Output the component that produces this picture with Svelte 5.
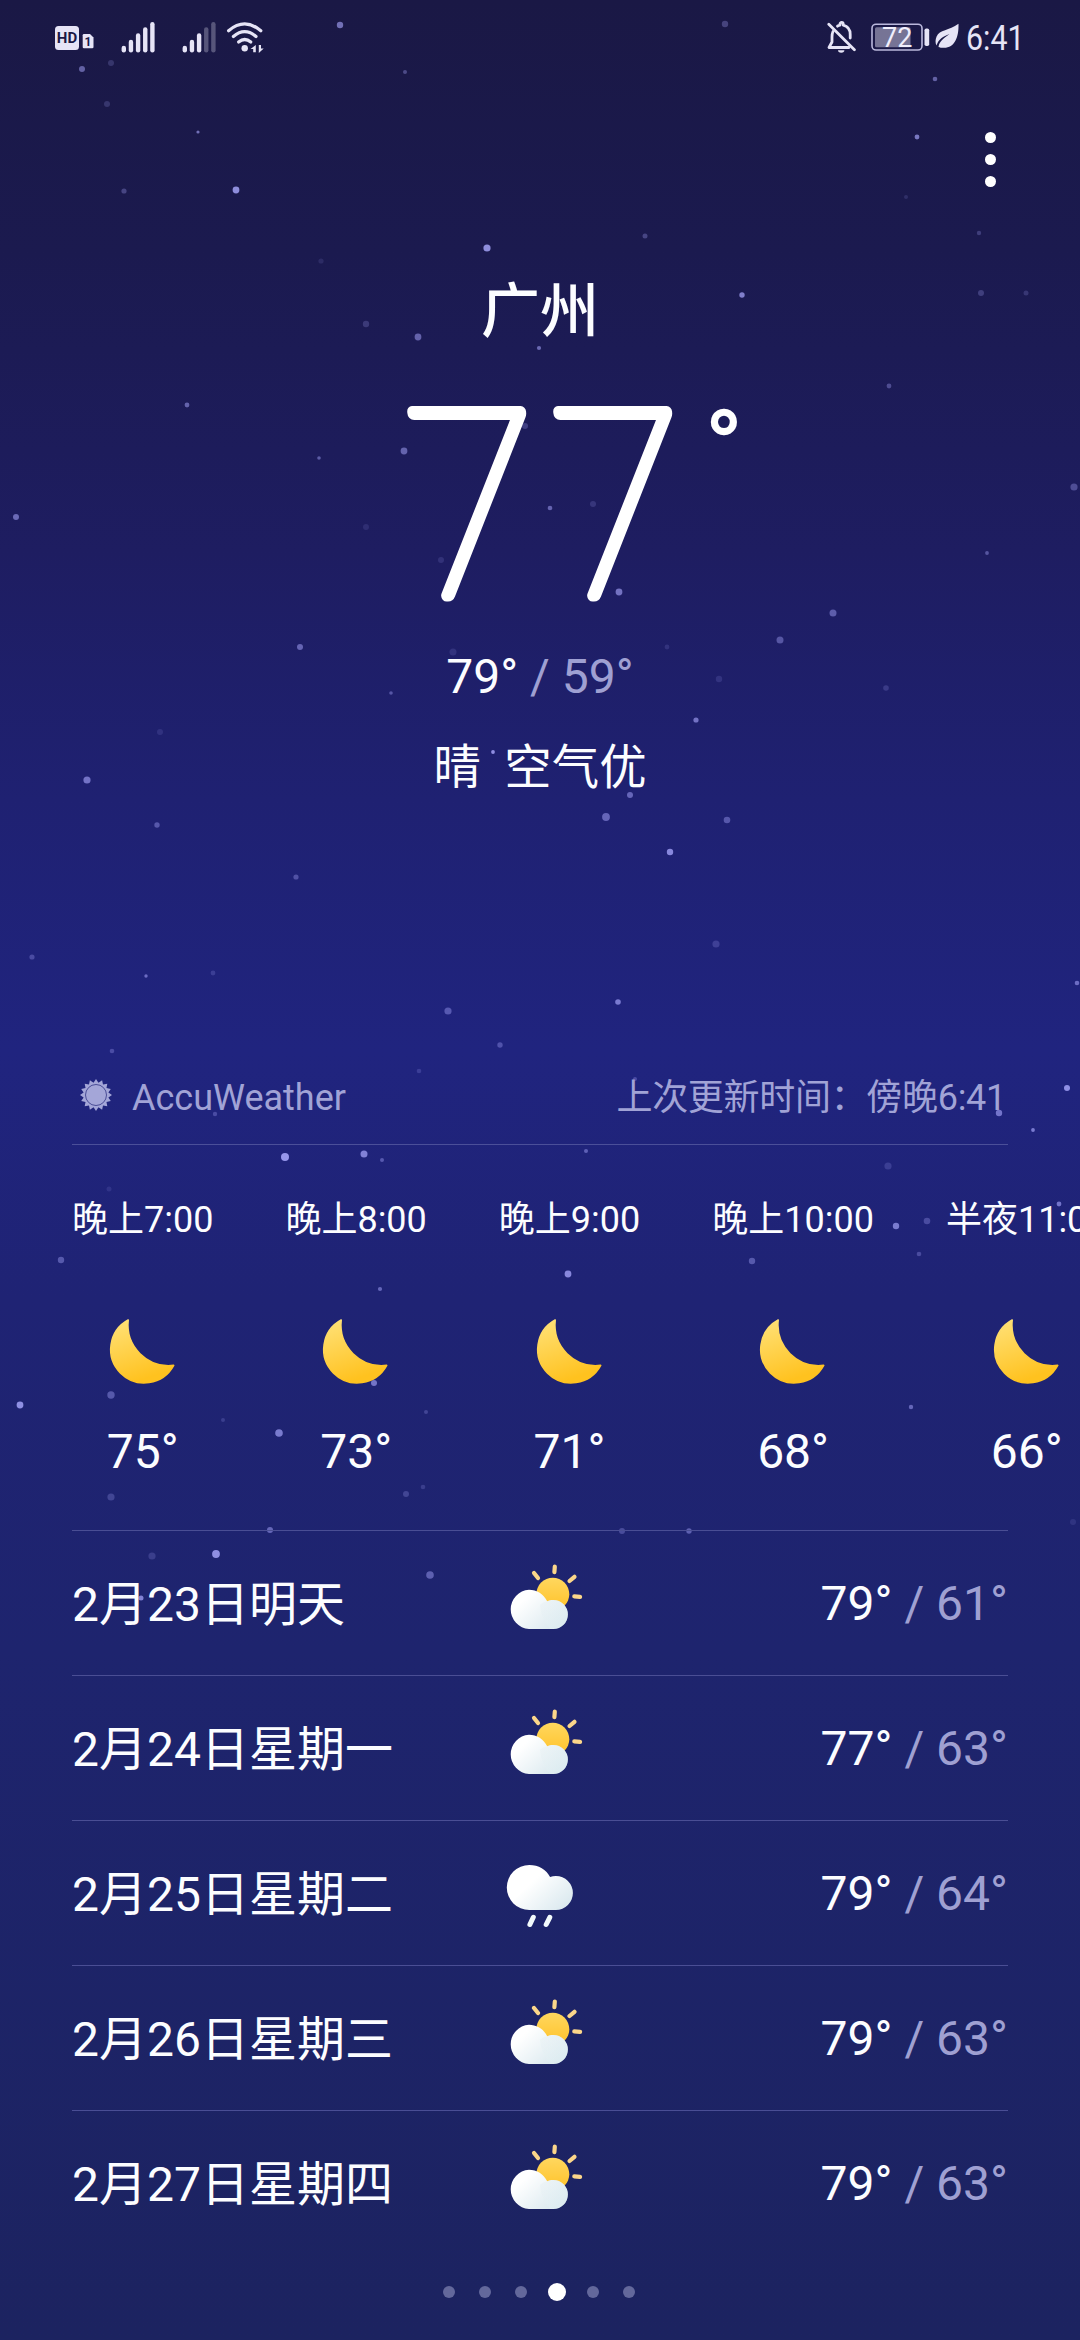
<script>
  const hours = [
    { label: '晚上7:00', temp: 75 },
    { label: '晚上8:00', temp: 73 },
    { label: '晚上9:00', temp: 71 },
    { label: '晚上10:00', temp: 68 },
    { label: '半夜11:00', temp: 66 },
  ]

  const days = [
    { date: '2月23日明天', icon: 'partly', high: 79, low: 61 },
    { date: '2月24日星期一', icon: 'partly', high: 77, low: 63 },
    { date: '2月25日星期二', icon: 'rain', high: 79, low: 64 },
    { date: '2月26日星期三', icon: 'partly', high: 79, low: 63 },
    { date: '2月27日星期四', icon: 'partly', high: 79, low: 63 },
  ]

  const pages = 6
  const current = 3

  // x, y, radius, opacity
  const stars = [
    [340, 25, 3.2, 0.6], [725, 24, 3.2, 0.3], [82, 69, 3, 0.5], [111, 63, 3, 0.2], [107, 104, 3, 0.2],
    [405, 72, 2, 0.35], [198, 132, 1.6, 0.6], [935, 79, 2.3, 0.5], [917, 137, 2.4, 0.65], [124, 191, 2.6, 0.3],
    [236, 190, 3.4, 0.8], [487, 248, 3.6, 0.8], [645, 236, 2.5, 0.3], [321, 261, 2.6, 0.12], [906, 197, 2, 0.15],
    [979, 233, 2.2, 0.25], [742, 295, 2.7, 0.7], [981, 293, 3, 0.25], [1026, 293, 2.5, 0.2], [366, 324, 3.2, 0.22],
    [418, 337, 3.4, 0.5], [539, 348, 2.1, 0.55], [187, 405, 2.4, 0.5], [889, 386, 2.4, 0.35], [404, 451, 3.4, 0.5],
    [319, 458, 1.8, 0.45], [16, 517, 3, 0.55], [1074, 487, 3.6, 0.35], [550, 508, 2.3, 0.5], [593, 504, 3, 0.18],
    [366, 527, 3, 0.12], [441, 560, 3, 0.15], [987, 553, 1.9, 0.4], [619, 592, 3.4, 0.6], [833, 613, 3.5, 0.45],
    [300, 647, 3, 0.5], [780, 640, 3.5, 0.4], [453, 652, 3.5, 0.15], [667, 647, 2.4, 0.15], [719, 679, 3.2, 0.15],
    [391, 693, 1.8, 0.4], [886, 688, 2.8, 0.2], [160, 732, 3, 0.13], [696, 720, 2.6, 0.6], [493, 752, 1.9, 0.8],
    [87, 780, 3.6, 0.6], [157, 825, 2.7, 0.4], [630, 795, 3, 0.5], [606, 817, 3.9, 0.5], [727, 820, 3.3, 0.4],
    [670, 852, 3.2, 0.75], [296, 877, 2.6, 0.35], [716, 944, 3.6, 0.22], [32, 957, 2.6, 0.3], [146, 976, 1.7, 0.55],
    [213, 973, 2.4, 0.2], [1077, 983, 2.3, 0.55], [618, 1002, 2.8, 0.65], [448, 1011, 3.6, 0.4], [500, 1045, 2.7, 0.35],
    [112, 1051, 2.3, 0.3], [1067, 1088, 3, 0.8], [999, 1113, 3.2, 0.6], [1033, 1130, 1.9, 0.65], [285, 1157, 4, 0.85],
    [364, 1154, 3.5, 0.7], [382, 1160, 2, 0.4], [586, 1151, 2, 0.45], [888, 1166, 3.6, 0.2], [525, 426, 3, 0.25],
    [215, 1114, 2.2, 0.3], [419, 1071, 2.3, 0.2], [635, 1079, 2, 0.3], [109, 1189, 2.5, 0.12], [896, 1226, 3.2, 0.65],
    [927, 1221, 3.3, 0.3], [919, 1254, 2.3, 0.3], [1059, 1204, 2.4, 0.6], [752, 1261, 3.2, 0.4], [568, 1274, 3.4, 0.75],
    [61, 1260, 3.2, 0.4], [380, 1289, 2.1, 0.5], [111, 1395, 3.7, 0.4], [374, 1383, 3, 0.6], [279, 1433, 3.8, 0.65],
    [111, 1497, 3.6, 0.25], [426, 1412, 2, 0.25], [406, 1494, 3, 0.25], [423, 1487, 2.3, 0.2], [223, 1420, 2, 0.2],
    [20, 1405, 3.4, 0.8], [911, 1407, 2.2, 0.5], [689, 1531, 2.7, 0.45], [1073, 1522, 3, 0.12], [270, 1530, 3, 0.5],
    [152, 1556, 3.6, 0.2], [216, 1554, 3.9, 0.8], [430, 1575, 3.8, 0.45], [141, 1598, 2.5, 0.7], [622, 1531, 3, 0.3],
  ]

  // sixteen-pointed rim of the provider logo
  const rim = [...Array(32)]
    .map((_, i) => {
      const r = i % 2 ? 12.6 : 16
      const a = (i * Math.PI) / 16
      return `${(18 + r * Math.sin(a)).toFixed(2)},${(18 - r * Math.cos(a)).toFixed(2)}`
    })
    .join(' ')
</script>

<main>
  <svg class="sky" width="1080" height="2340" viewBox="0 0 1080 2340">
    {#each stars as [x, y, r, o]}
      <circle cx={x} cy={y} {r} fill="#abaaff" opacity={o} />
    {/each}
  </svg>

  <header class="status">
    <svg class="sim" width="40" height="32" viewBox="0 0 40 32">
      <rect x="0" y="5" width="24" height="24" rx="3.5" fill="#e6e4f6" />
      <text class="hd" x="12" y="22.3" text-anchor="middle">HD</text>
      <path d="M29 13h6l3.5 3.5V26a1.3 1.3 0 0 1-1.3 1.3H29a1.3 1.3 0 0 1-1.3-1.3V14.3a1.3 1.3 0 0 1 1.3-1.3z" fill="#e6e4f6" />
      <text class="one" x="33" y="24.8" text-anchor="middle">1</text>
    </svg>
    {#each [5, 3] as level}
      <svg class="signal" width="34" height="32" viewBox="0 0 34 32">
        {#each [6.8, 12.8, 19.2, 25.2, 30.5] as h, i}
          <rect x={0.6 + i * 7.15} y={31.5 - h} width="4.4" height={h} rx="2.2" fill="#e6e4f6" opacity={i < level ? 1 : 0.3} />
        {/each}
      </svg>
    {/each}
    <svg class="wifi" width="40" height="32" viewBox="0 0 40 32">
      <g fill="none" stroke="#e6e4f6" stroke-width="3.2" stroke-linecap="round">
        <path d="M2.6 9.7q16.1-13.6 32.2 0" />
        <path d="M7.4 15.5q11.3-9.6 22.6 0" />
        <path d="M12.6 21q6.1-5 12.2 0" />
      </g>
      <circle cx="18.7" cy="27.3" r="3.2" fill="#e6e4f6" />
      <path d="M29.8 24v7.3h-2.6v-3.3h-2.7zM32.8 24h2.2v3.4h2.7l-4.9 4.6z" fill="#e6e4f6" />
    </svg>

    <svg class="bell" width="30" height="32" viewBox="0 0 30 32">
      <g fill="none" stroke="#e6e4f6" stroke-width="2.8" stroke-linecap="round" stroke-linejoin="round">
        <path d="M6 10.5c-.8 1.7-1 3.3-1 5.5v5l-3 5.5h20" />
        <path d="M10.5 5.2c.8-.6 1.6-.9 2.5-1.1V3a1.6 1.6 0 0 1 3.200 0v1.100c4.600 1.100 7 4.600 7 9.400v3.500" />
        <path d="M1.8 3.3l25.600 25.500" />
      </g>
      <path d="M11 29.3h6.400a3.200 2.400 0 0 1-6.400 0z" fill="#e6e4f6" />
    </svg>
    <svg class="battery" width="59" height="32" viewBox="0 0 59 32">
      <rect x="1" y="3.2" width="50" height="25.8" rx="4" fill="none" stroke="#bab8dc" stroke-width="1.6" />
      <rect x="4" y="6.2" width="35.5" height="20" rx="1.5" fill="#e6e4f6" opacity=".45" />
      <rect x="53.5" y="7.5" width="4.7" height="17.5" rx="1.8" fill="#e6e4f6" />
      <text class="charge" x="26.3" y="25.5" text-anchor="middle">72</text>
    </svg>
    <svg class="leaf" width="24" height="32" viewBox="0 0 24 32">
      <path d="M23.5 2.8c.4 13.4-3.700 24-14.500 24-2.500 0-4.300-.4-5.500-.9C4.300 20.700 8 17.500 14.500 13 8 15.500 3.500 18 1.600 24.500 0 22 .4 18.200 1.600 15.500 4.500 8.500 14 10 23.500 2.800z" fill="#e6e4f6" />
    </svg>
    <span class="clock">6:41</span>
  </header>

  <nav>
    <button class="menu" aria-label="更多">
      <i></i><i></i><i></i>
    </button>
  </nav>

  <section class="now">
    <h1>广州</h1>
    <svg class="big" width="340" height="296" viewBox="0 0 340 296">
      <text transform="matrix(.93 0 .07 1.029 8 244)">7</text>
      <text transform="matrix(.93 0 .07 1.029 154 244)">7</text>
      <text class="degree" x="306" y="127">°</text>
    </svg>
    <p class="range">79° <span>/ 59°</span></p>
    <p class="sky-text">晴&nbsp; 空气优</p>
  </section>

  <section class="source">
    <svg width="36" height="36" viewBox="0 0 36 36">
      <polygon points={rim} fill="#a4a6d8" />
      <circle cx="18" cy="18" r="10.5" fill="#a4a6d8" stroke="#4a4d96" stroke-width="1" />
    </svg>
    <span>AccuWeather</span>
    <span class="updated">上次更新时间：傍晚6:41</span>
  </section>

  <section class="hourly">
    {#each hours as hour}
      <div class="hour">
        <span class="label">{hour.label}</span>
        <svg width="96" height="96" viewBox="0 0 96 96">
          <defs>
            <linearGradient id="moon" x1="0" y1="0" x2=".35" y2="1">
              <stop offset="0" stop-color="#ffe27a" />
              <stop offset="1" stop-color="#ffc21f" />
            </linearGradient>
          </defs>
          <path d="M33.2 17A33.5 33.5 0 1 0 78.7 62.4A41 41 0 0 1 33.2 17z" fill="url(#moon)" stroke="url(#moon)" stroke-width="1.6" stroke-linejoin="round" />
        </svg>
        <span class="temp">{hour.temp}°</span>
      </div>
    {/each}
  </section>

  <section class="daily">
    {#each days as day}
      <div class="day">
        <span class="date">{day.date}</span>
        <svg width="96" height="96" viewBox="0 0 96 96">
          <defs>
            <linearGradient id="sun" x1="0" y1="0" x2="0" y2="1">
              <stop offset="0" stop-color="#ffd75e" />
              <stop offset="1" stop-color="#ffc229" />
            </linearGradient>
            <linearGradient id="cloud" gradientUnits="userSpaceOnUse" x1="25" y1="36" x2="62" y2="76">
              <stop offset=".2" stop-color="#ffffff" />
              <stop offset="1" stop-color="#d9e8ee" />
            </linearGradient>
            <linearGradient id="puff" x1="0" y1="0" x2="1" y2="1">
              <stop offset="0" stop-color="#dfeaee" />
              <stop offset="1" stop-color="#eaf8fa" />
            </linearGradient>
          </defs>
          {#if day.icon === 'partly'}
            <g stroke="#fbd68a" stroke-width="4.2" stroke-linecap="round">
              <path d="M62.8 11.7l-.4 5.5M42 18l4 5M82.5 21.8l-5 4.2M82.3 41.4l5.8.4" />
            </g>
            <circle cx="60.8" cy="39.2" r="16.5" fill="url(#sun)" />
            <path d="M37 34.7a19.7 19.7 0 0 0 0 39.3h24.400a14.500 14.500 0 0 0 0-29c-2.500 0-4.500.4-6.200 1.200C51.700 39 44.800 34.700 37 34.700z" fill="url(#cloud)" />
            <path d="M48 49.800a14.500 14.500 0 0 1 7.200-3.600q2.800-1.200 6.200-1.200a14.500 14.500 0 0 1 0 29H58q-9-10-10-24.200z" fill="url(#puff)" opacity=".3" />
          {:else}
            <path d="M37.3 20a22.5 22.5 0 0 0 0 45h26.600a17 17 0 0 0 0-34c-2 0-4 .3-5.800 1C54.500 24.700 46.500 20 37.300 20z" fill="url(#cloud)" />
            <path d="M41.3 72.3l-3.4 7.2M57.8 72.3l-3.6 7.2" stroke="#f2fafc" stroke-width="5" stroke-linecap="round" />
          {/if}
        </svg>
        <span class="range">{day.high}° <span>/ {day.low}°</span></span>
      </div>
    {/each}
  </section>

  <footer>
    {#each Array(pages) as _, i}
      <i class:active={i === current}></i>
    {/each}
  </footer>
</main>

<style>
  :global(body) {
    margin: 0;
    background: #1c2360;
  }

  main {
    position: relative;
    box-sizing: border-box;
    width: 1080px;
    height: 2340px;
    overflow: hidden;
    color: #fcfdff;
    font-family: Roboto, 'Noto Sans CJK SC', sans-serif;
    font-size: 48px;
    line-height: 56px;
    background: linear-gradient(#1a1845 0, #1b1a4f 250px, #1e1d61 550px, #1f2172 800px, #20247f 1050px, #1f2374 1300px, #1e246e 1650px, #1c2360 2340px);
  }

  h1,
  p {
    margin: 0;
  }

  .sky {
    position: absolute;
    top: 0;
    left: 0;
  }

  header,
  nav,
  section,
  footer {
    position: relative;
  }

  .status {
    display: flex;
    align-items: center;
    height: 74px;
    padding: 0 59px 0 55px;
    color: #e6e4f6;
  }

  .sim {
    margin-right: 26px;
  }

  .signal {
    margin-right: 27px;
  }

  .wifi {
    margin-left: -17px;
  }

  .bell {
    margin-left: auto;
    margin-right: 14px;
  }

  .battery {
    margin-right: 5px;
  }

  .leaf {
    margin-right: 7px;
  }

  .hd {
    fill: #1a1845;
    font-size: 15px;
    font-weight: 700;
  }

  .one {
    fill: #1a1845;
    font-size: 12px;
    font-weight: 700;
  }

  .charge {
    fill: #f0eefc;
    font-size: 27px;
  }

  .clock {
    width: 55px;
    padding-top: 2px;
    font-size: 34.5px;
    line-height: 40px;
    transform: scaleX(0.88);
    transform-origin: 0 50%;
  }

  nav {
    display: flex;
    align-items: center;
    justify-content: flex-end;
    height: 170px;
    padding-right: 84px;
  }

  .menu {
    display: flex;
    flex-direction: column;
    gap: 11px;
    padding: 0;
    border: 0;
    background: none;
  }

  .menu i {
    width: 11px;
    height: 11px;
    border-radius: 50%;
    background: #fff;
  }

  .now {
    display: flex;
    flex-direction: column;
    align-items: center;
    padding-top: 28px;
  }

  h1 {
    font-size: 59px;
    font-weight: 500;
    line-height: 80px;
  }

  .big {
    margin-left: 60px;
    margin-bottom: 1px;
    overflow: visible;
    fill: #fff;
    stroke: #fff;
    stroke-linejoin: round;
    font-family: Lato, Roboto, sans-serif;
    font-size: 256px;
    font-weight: 100;
  }

  .big text {
    stroke-width: 10.8px;
  }

  .big .degree {
    font-family: Roboto, sans-serif;
    font-size: 94px;
    stroke-width: 4.6px;
  }

  .range span {
    color: #9fa0d2;
  }

  .sky-text {
    margin-top: 35px;
    font-size: 47.4px;
    white-space: pre;
  }

  .source {
    display: flex;
    margin: 278px 72px 0;
    padding: 0 2px 22px 6px;
    border-bottom: 1px solid #4b4f99;
    color: #a1a3d6;
    font-size: 36px;
    line-height: 48px;
  }

  .source svg {
    margin: 3px 18px 0 0;
  }

  .updated {
    margin-left: auto;
    letter-spacing: -0.3px;
  }

  .hourly {
    display: flex;
    gap: 72px;
    padding: 51px 0 50px 72px;
    white-space: nowrap;
  }

  .hour {
    display: flex;
    flex: none;
    flex-direction: column;
    align-items: center;
  }

  .label {
    font-size: 36px;
    line-height: 48px;
  }

  .hour svg {
    margin: 59px 0 25px;
  }

  .daily {
    margin: 0 72px;
  }

  .day {
    display: grid;
    grid-template-columns: 1fr 96px 1fr;
    align-items: center;
    box-sizing: border-box;
    height: 145px;
    border-top: 1px solid #4a4e94;
  }

  .date {
    padding-top: 3px;
  }

  .day .range {
    padding-top: 2px;
    text-align: right;
  }

  footer {
    display: flex;
    align-items: center;
    justify-content: center;
    gap: 24px;
    height: 74px;
    padding-right: 3px;
  }

  footer i {
    width: 12px;
    height: 12px;
    border-radius: 50%;
    background: #63689b;
  }

  footer .active {
    width: 18px;
    height: 18px;
    margin: 0 -3px;
    background: #fff;
  }
</style>
